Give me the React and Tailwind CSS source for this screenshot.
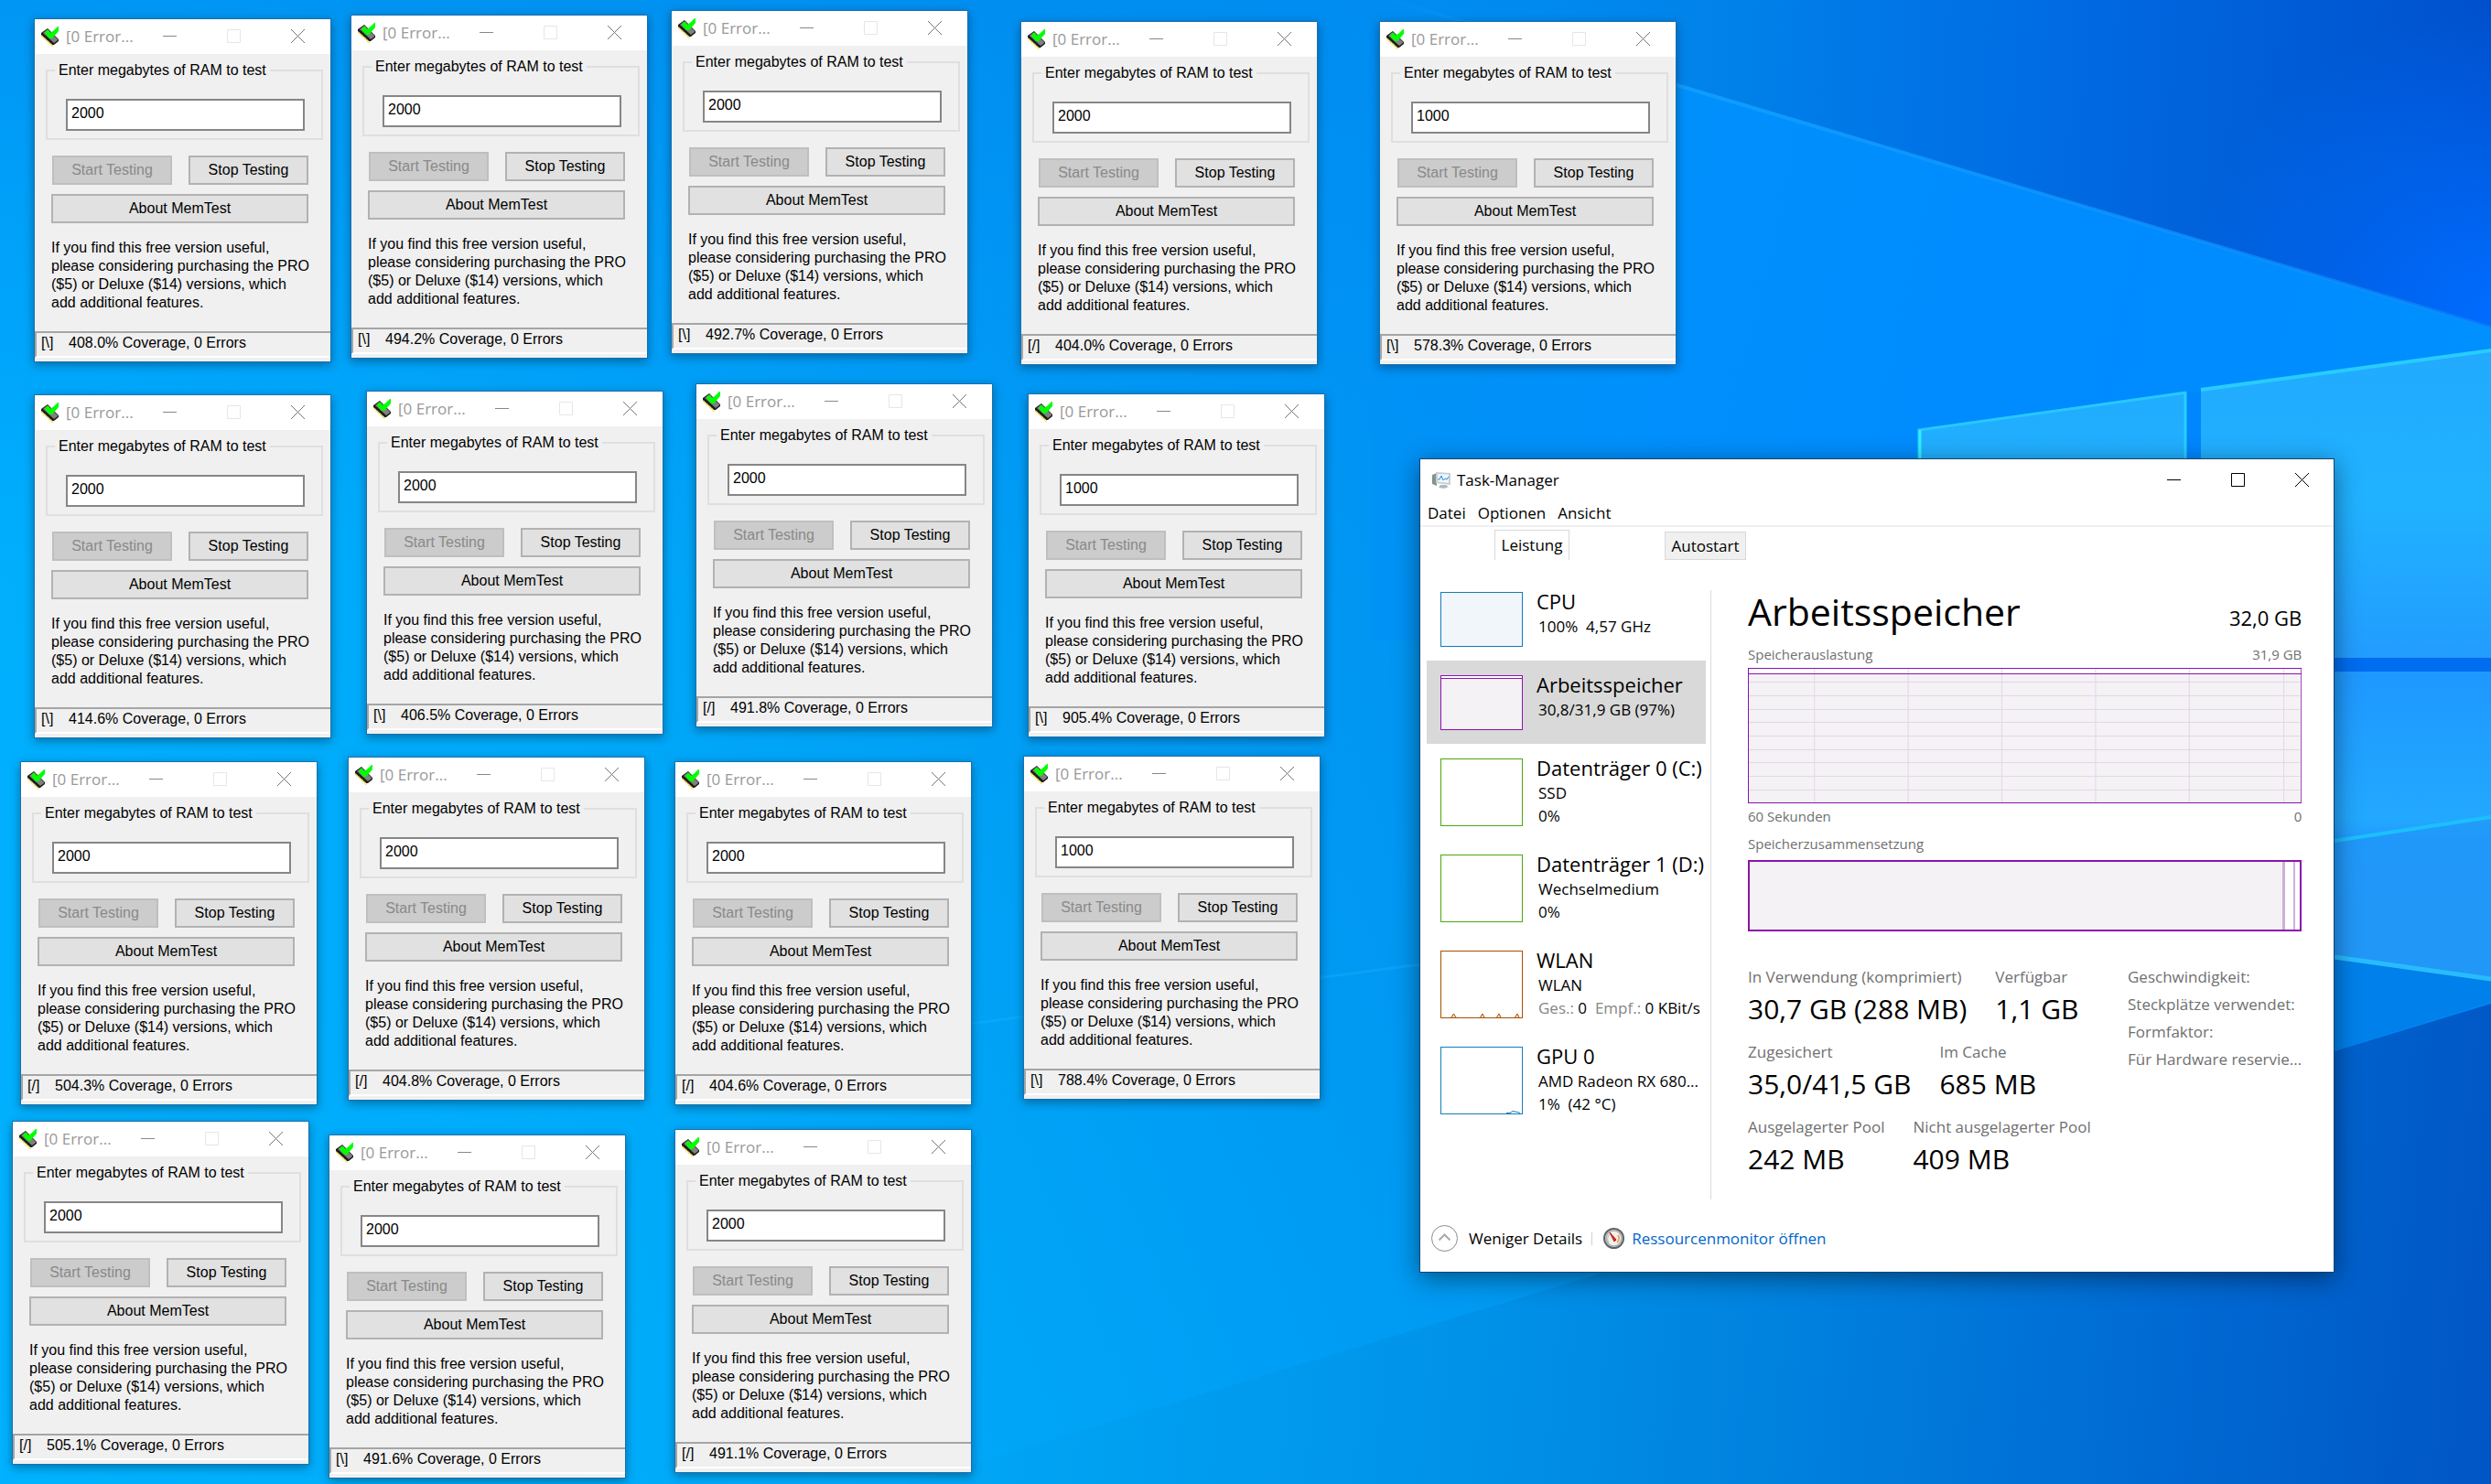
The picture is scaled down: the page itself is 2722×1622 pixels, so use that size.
import React from "react";
import clsx from "clsx";

const memTests = [
  { x: 37, y: 20, mb: "2000", spin: "[\\]", coverage: "408.0%" },
  { x: 383, y: 16, mb: "2000", spin: "[\\]", coverage: "494.2%" },
  { x: 733, y: 11, mb: "2000", spin: "[\\]", coverage: "492.7%" },
  { x: 1115, y: 23, mb: "2000", spin: "[/]", coverage: "404.0%" },
  { x: 1507, y: 23, mb: "1000", spin: "[\\]", coverage: "578.3%" },
  { x: 37, y: 431, mb: "2000", spin: "[\\]", coverage: "414.6%" },
  { x: 400, y: 427, mb: "2000", spin: "[\\]", coverage: "406.5%" },
  { x: 760, y: 419, mb: "2000", spin: "[/]", coverage: "491.8%" },
  { x: 1123, y: 430, mb: "1000", spin: "[\\]", coverage: "905.4%" },
  { x: 22, y: 832, mb: "2000", spin: "[/]", coverage: "504.3%" },
  { x: 380, y: 827, mb: "2000", spin: "[/]", coverage: "404.8%" },
  { x: 737, y: 832, mb: "2000", spin: "[/]", coverage: "404.6%" },
  { x: 1118, y: 826, mb: "1000", spin: "[\\]", coverage: "788.4%" },
  { x: 13, y: 1225, mb: "2000", spin: "[/]", coverage: "505.1%" },
  { x: 359, y: 1240, mb: "2000", spin: "[\\]", coverage: "491.6%" },
  { x: 737, y: 1234, mb: "2000", spin: "[/]", coverage: "491.1%" },
];

const Wallpaper = () => (
  <svg
    className="absolute inset-0 h-full w-full"
    viewBox="0 0 2722 1622"
    preserveAspectRatio="none"
    aria-hidden="true"
  >
    <defs>
      <linearGradient id="base" x1="0" y1="1622" x2="2722" y2="500" gradientUnits="userSpaceOnUse">
        <stop offset="0" stopColor="#00b2ff" />
        <stop offset="0.3" stopColor="#00a9f9" />
        <stop offset="0.55" stopColor="#0098f2" />
        <stop offset="0.8" stopColor="#008cf4" />
        <stop offset="1" stopColor="#0082f8" />
      </linearGradient>
      <linearGradient id="top" x1="0" y1="0" x2="0" y2="620" gradientUnits="userSpaceOnUse">
        <stop offset="0" stopColor="#0088ee" stopOpacity="0.6" />
        <stop offset="1" stopColor="#0090ff" stopOpacity="0" />
      </linearGradient>
      <linearGradient id="sky" x1="1500" y1="0" x2="2722" y2="60" gradientUnits="userSpaceOnUse">
        <stop offset="0" stopColor="#008cf0" stopOpacity="0" />
        <stop offset="0.28" stopColor="#0084ea" />
        <stop offset="0.6" stopColor="#006ce4" />
        <stop offset="1" stopColor="#0050cc" />
      </linearGradient>
      <radialGradient id="skyGlow" cx="2722" cy="340" r="330" gradientUnits="userSpaceOnUse">
        <stop offset="0" stopColor="#006cff" />
        <stop offset="1" stopColor="#006cff" stopOpacity="0" />
      </radialGradient>
      <linearGradient id="beam" x1="1500" y1="0" x2="2722" y2="300" gradientUnits="userSpaceOnUse">
        <stop offset="0" stopColor="#0090f8" stopOpacity="0" />
        <stop offset="0.3" stopColor="#0090fc" />
        <stop offset="0.7" stopColor="#008aff" />
        <stop offset="1" stopColor="#0090ff" />
      </linearGradient>
      <linearGradient id="ray" x1="1500" y1="0" x2="2722" y2="0" gradientUnits="userSpaceOnUse">
        <stop offset="0" stopColor="#18a0ff" stopOpacity="0" />
        <stop offset="0.3" stopColor="#109cff" />
        <stop offset="1" stopColor="#1090ff" stopOpacity="0.5" />
      </linearGradient>
      <linearGradient id="pane" x1="0" y1="380" x2="0" y2="719" gradientUnits="userSpaceOnUse">
        <stop offset="0" stopColor="#22aaff" />
        <stop offset="0.5" stopColor="#20b2ff" />
        <stop offset="1" stopColor="#229cff" />
      </linearGradient>
      <linearGradient id="paneLow" x1="0" y1="734" x2="0" y2="1070" gradientUnits="userSpaceOnUse">
        <stop offset="0" stopColor="#1e98ff" />
        <stop offset="0.48" stopColor="#22a8ff" />
        <stop offset="0.54" stopColor="#209cff" />
        <stop offset="1" stopColor="#2298f6" />
      </linearGradient>
      <linearGradient id="floor" x1="1060" y1="1400" x2="2722" y2="1560" gradientUnits="userSpaceOnUse">
        <stop offset="0" stopColor="#00a6f5" />
        <stop offset="0.3" stopColor="#0094ea" />
        <stop offset="0.55" stopColor="#0080de" />
        <stop offset="0.8" stopColor="#0068d2" />
        <stop offset="1" stopColor="#0056c4" />
      </linearGradient>
    </defs>
    <rect width="2722" height="1622" fill="url(#base)" />
    <rect width="2722" height="620" fill="url(#top)" />
    <path d="M1500 -6L2722 358V700H1500Z" fill="url(#beam)" />
    <path d="M1500 0H2722V358L1840 95L1500 -6Z" fill="url(#sky)" />
    <path d="M1840 95L2722 358V0H1840Z" fill="url(#skyGlow)" />
    <path d="M1500 -6L2722 358" stroke="url(#ray)" strokeWidth="4" />
    <path d="M990 1622L2722 1097V1622Z" fill="url(#floor)" />
    <path d="M1060 1119L1560 1053" stroke="#18b4ff" strokeWidth="3" opacity="0.35" />
    {/* window panes of the logo */}
    <path d="M2389 428H2722V1045H2389Z" fill="#006cf0" />
    <path d="M2389 425L2722 380V428H2389Z" fill="#008eff" />
    <path d="M2389 428H2405V520H2389Z" fill="#0086ff" />
    <path d="M2096 469L2389 428V719H2096Z" fill="url(#pane)" />
    <path d="M2405 425L2722 382V719H2405Z" fill="url(#pane)" />
    <path d="M2405 734H2722V1070L2405 1026Z" fill="url(#paneLow)" />
    <path d="M2551 919L2722 893V1070L2551 1045Z" fill="#2296f6" opacity="0.6" />
    <path d="M2540 1043L2722 1070V1095L2540 1152Z" fill="#0080ea" />
    <path d="M2097 520V470L2389 429" fill="none" stroke="#28c8ff" strokeWidth="3" />
    <path d="M2098 470V520" stroke="#30f0ff" strokeWidth="3" />
    <path d="M2388 429V520" stroke="#28d0ff" strokeWidth="3" />
    <path d="M2405 426L2722 383" stroke="#28ccff" strokeWidth="4" />
    <path d="M2551 919L2722 893" stroke="#1cc0ff" strokeWidth="4" />
    <path d="M2551 1046L2722 1070" stroke="#28bcff" strokeWidth="5" />
  </svg>
);

const ChipIcon = () => (
  <svg className="h-[22px] w-5" viewBox="0 0 20 22" aria-hidden="true">
    <path d="M0 10L13 22" stroke="#e8d840" strokeWidth="2" strokeDasharray="1 1" />
    <path d="M0 7L7 2L19 14V16L14 20H12L0 9Z" fill="#1c1c1c" />
    <path d="M2 7L7 3L18 14V15L14 18Z" fill="#808080" />
    <path d="M1 10L12 20" stroke="#e8d840" strokeWidth="1" strokeDasharray="1 1" />
    <path d="M4 7L6 4L8 4L10 7L14 4L18 0H19V5L12 13H9Z" fill="#0f0" />
  </svg>
);

const CaptionButtons = ({ dim, className }) => (
  <div className={clsx("flex", className)}>
    <button aria-label="Minimize" className="h-4 w-4">
      <svg viewBox="0 0 16 16" stroke={dim ? "#888" : "#000"}>
        <path d="M0 7.5H15" />
      </svg>
    </button>
    <button aria-label="Maximize" disabled={dim} className="h-4 w-4">
      <svg viewBox="0 0 16 16" fill="none" stroke={dim ? "#e6e6e6" : "#000"}>
        <path d="M.5 .5H14.5V14.5H.5Z" />
      </svg>
    </button>
    <button aria-label="Close" className="h-4 w-4">
      <svg viewBox="0 0 16 16" stroke={dim ? "#777" : "#000"}>
        <path d="M0 0L15 15M15 0L0 15" />
      </svg>
    </button>
  </div>
);

const MemTestWindow = ({ id, x, y, mb, spin, coverage }) => (
  <section
    className="absolute flex w-[325px] flex-col border border-[#1a6fae] bg-[#f0f0f0] font-['Liberation_Sans',sans-serif] text-[16px] leading-5 text-black shadow-[0_3px_10px_rgba(0,0,0,0.35)]"
    style={{ left: x, top: y }}
  >
    <header className="flex h-[38px] items-center bg-white pl-[7px]">
      <ChipIcon />
      <h2 className="ml-[7px] font-['Open_Sans',sans-serif] text-[17px] text-[#999]">[0 Error...</h2>
      <CaptionButtons dim className="mr-[27px] ml-auto gap-[54px]" />
    </header>
    <fieldset className="mt-2 mr-2 ml-3 h-[86px] border-2 border-[#dfdfdf] pr-[18px] pl-5">
      <legend className="-ml-3 px-1">
        <label htmlFor={id}>Enter megabytes of RAM to test</label>
      </legend>
      <input
        id={id}
        defaultValue={mb}
        className="mt-[21px] block h-[35px] w-full border-2 border-[#868686] bg-white px-1 pb-1"
      />
    </fieldset>
    <div className="mt-[17px] mr-6 ml-[19px] flex justify-between">
      <button disabled className="h-8 w-[131px] border-2 border-[#bfbfbf] bg-[#ccc] text-[#898989]">
        Start Testing
      </button>
      <button className="h-8 w-[131px] border-2 border-[#b2b2b2] bg-[#e1e1e1]">Stop Testing</button>
    </div>
    <button className="mt-2.5 mr-6 ml-[18px] h-8 border-2 border-[#b2b2b2] bg-[#e1e1e1]">
      About MemTest
    </button>
    <p className="mt-[17px] ml-[18px] whitespace-nowrap">
      If you find this free version useful,
      <br />
      please considering purchasing the PRO
      <br />
      ($5) or Deluxe ($14) versions, which
      <br />
      add additional features.
    </p>
    <footer className="mt-[21px] mb-1 flex h-[29px] border-t-2 border-b-2 border-l-2 border-t-[#a5a5a5] border-b-white border-l-[#a5a5a5] pt-px pl-[5px]">
      <span className="w-[30px]">{spin}</span>
      <span>{coverage} Coverage, 0 Errors</span>
    </footer>
  </section>
);

const devices = [
  { name: "CPU", lines: ["100%  4,57 GHz"], graph: "h-[60px] border-[#117dbb] bg-[#f1f6fa]" },
  {
    name: "Arbeitsspeicher",
    lines: ["30,8/31,9 GB (97%)"],
    graph: "h-[60px] border-[#8b12ae] bg-[#f4f2f4]",
    selected: true,
    chart: (
      <>
        <path d="M0 0H88V2H0Z" fill="#fff" />
        <path d="M0 2.5H88" stroke="#8b12ae" />
      </>
    ),
  },
  { name: "Datenträger 0 (C:)", lines: ["SSD", "0%"], graph: "h-[74px] border-[#4da60c] bg-white" },
  { name: "Datenträger 1 (D:)", lines: ["Wechselmedium", "0%"], graph: "h-[74px] border-[#4da60c] bg-white" },
  {
    name: "WLAN",
    lines: [
      "WLAN",
      <>
        <span className="text-[#868686]">Ges.:</span>
        {" 0  "}
        <span className="text-[#868686]">Empf.:</span>
        {" 0 KBit/s"}
      </>,
    ],
    graph: "h-[74px] border-[#a74f01] bg-white",
    chart: (
      <path
        d="M11 72L13.5 68L16 72M42.5 72L45 68L47 72M60.5 72L63 68L65 72M80.5 72L83 68L85 72"
        fill="#eedfcf"
        stroke="#a74f01"
      />
    ),
  },
  {
    name: "GPU 0",
    lines: ["AMD Radeon RX 680...", "1%  (42 °C)"],
    graph: "h-[74px] border-[#117dbb] bg-white",
    chart: <path d="M71 71.5H75L78 69.5L83 70.5L86 71.5" fill="none" stroke="#117dbb" />,
  },
];

const DeviceItem = ({ device }) => (
  <button
    className={clsx(
      "flex w-[305px] gap-[15px] pt-4 pb-[15px] pl-[15px] text-left whitespace-nowrap",
      device.selected && "bg-[#d9d9d9]"
    )}
  >
    <span className={clsx("w-[90px] shrink-0 border", device.graph)}>
      <svg className="h-full w-full" viewBox={device.graph.startsWith("h-[60px]") ? "0 0 88 58" : "0 0 88 72"}>
        {device.chart}
      </svg>
    </span>
    <span className="-my-1 flex h-0 flex-col">
      <span className="text-[22px] leading-[29px]">{device.name}</span>
      {device.lines.map((line, index) => (
        <span key={index} className="pl-0.5 text-[17px] leading-[25px] whitespace-pre">
          {line}
        </span>
      ))}
    </span>
  </button>
);

const UsageGraph = () => (
  <svg className="block h-[148px] w-full" viewBox="0 0 603 148" preserveAspectRatio="none" aria-hidden="true">
    <path d="M0 0H603V148H0Z" fill="#fff" />
    <path d="M0 6H603V148H0Z" fill="#f4f2f4" />
    <path
      d="M0 15.5H601M0 30.5H601M0 45.5H601M0 59.5H601M0 74.5H601M0 89.5H601M0 103.5H601M0 118.5H601M0 133.5H601M72.5 0V148M174.5 0V148M276.5 0V148M378.5 0V148M480.5 0V148M583.5 0V148"
      stroke="#e4d5e9"
    />
    <path d="M0 6.5H603M.5 .5H602.5V147.5H.5Z" fill="none" stroke="#8b12ae" />
  </svg>
);

const Stat = ({ label, value }) => (
  <div className="h-[82px]">
    <dt className="text-[17px] leading-[30px] text-[#707070]">{label}</dt>
    <dd className="text-[30px] leading-10">{value}</dd>
  </div>
);

const TaskManagerIcon = () => (
  <svg className="h-5 w-5" viewBox="0 0 20 20" aria-hidden="true">
    <path d="M0 4L5 2V16L0 14Z" fill="#8b9298" />
    <path d="M1 6V13" stroke="#5f9a5a" strokeWidth="1" />
    <path d="M4 1L20 2V15L4 13Z" fill="#c9cdd1" />
    <path d="M6 3L18 3.5V13L6 11.5Z" fill="#eef6fc" />
    <path d="M6 9L8 9L10 5L12 10L14 8L16 9L18 6" fill="none" stroke="#2b8fd0" />
    <path d="M9 15H15L18 17L13 19L7 18Z" fill="#b4b8bb" />
  </svg>
);

const GaugeIcon = () => (
  <svg className="h-[23px] w-[23px]" viewBox="0 0 23 23" aria-hidden="true">
    <circle cx="11.5" cy="11.5" r="10.5" fill="#e8e6e2" stroke="#5c6468" strokeWidth="2" />
    <circle cx="11.5" cy="11.5" r="8.5" fill="#f3efea" stroke="#a9adb0" strokeWidth="1.5" />
    <path d="M16 8A6 6 0 0 1 15 16" fill="none" stroke="#e9a65c" strokeWidth="2" />
    <path d="M6 16A6.5 6.5 0 0 1 7 7" fill="none" stroke="#b9b4ac" strokeWidth="1" />
    <path d="M7 5L14 13L12 15Z" fill="#d8291c" stroke="#b02018" />
  </svg>
);

const TaskManager = () => (
  <main className="absolute top-[501px] left-[1551px] w-[1000px] border border-[#12466f] bg-white font-['Open_Sans','Noto_Sans',sans-serif] text-[17px] text-black shadow-[0_6px_26px_rgba(0,0,0,0.45)]">
    <header className="flex h-11 items-center pt-px pl-[13px]">
      <TaskManagerIcon />
      <h1 className="ml-[7px]">Task-Manager</h1>
      <CaptionButtons className="mr-[26px] ml-auto gap-[54px]" />
    </header>
    <nav className="flex h-[30px] gap-[13px] border-b-2 border-[#f0f0f0] pl-2 leading-[30px]">
      <button>Datei</button>
      <button>Optionen</button>
      <button>Ansicht</button>
    </nav>
    <div role="tablist" className="flex h-9 items-end pl-[81px]">
      <button role="tab" aria-selected="true" className="h-[33px] w-[82px] border border-b-0 border-[#d9d9d9]">
        Leistung
      </button>
      <button
        role="tab"
        aria-selected="false"
        className="ml-[104px] h-[31px] w-[89px] border border-[#d9d9d9] bg-[#f0f0f0]"
      >
        Autostart
      </button>
    </div>
    <div className="mt-[19px] flex h-[680px]">
      <aside className="flex w-[311px] shrink-0 flex-col pl-[7px]">
        {devices.map((device) => (
          <DeviceItem key={device.name} device={device} />
        ))}
      </aside>
      <section className="mt-3.5 ml-1.5 flex-1 border-l border-[#d9d9d9] pr-[37px] pl-10">
        <div className="flex items-baseline justify-between">
          <h2 className="text-[41px] leading-[46px]">Arbeitsspeicher</h2>
          <span className="text-[22px]">32,0 GB</span>
        </div>
        <div className="mt-2.5 mb-0.5 flex justify-between text-[15px] leading-[26px] text-[#707070]">
          <span>Speicherauslastung</span>
          <span>31,9 GB</span>
        </div>
        <UsageGraph />
        <div className="mt-px flex justify-between text-[15px] leading-[26px] text-[#707070]">
          <span>60 Sekunden</span>
          <span>0</span>
        </div>
        <div className="mt-1 text-[15px] leading-[26px] text-[#707070]">Speicherzusammensetzung</div>
        <div className="mt-[5px] flex h-[78px] border-2 border-[#8b12ae]">
          <div className="flex-1 border-r-[3px] border-[#cdb0d8] bg-[#f4f2f4]" />
          <div className="w-[11px] border-r-2 border-[#cdb0d8]" />
          <div className="w-[5px]" />
        </div>
        <div className="mt-[35px] flex whitespace-nowrap">
          <dl className="w-[415px]">
            <div className="flex gap-[31px]">
              <Stat label="In Verwendung (komprimiert)" value="30,7 GB (288 MB)" />
              <Stat label="Verfügbar" value="1,1 GB" />
            </div>
            <div className="flex gap-[31px]">
              <Stat label="Zugesichert" value="35,0/41,5 GB" />
              <Stat label="Im Cache" value="685 MB" />
            </div>
            <div className="flex gap-[31px]">
              <Stat label="Ausgelagerter Pool" value="242 MB" />
              <Stat label="Nicht ausgelagerter Pool" value="409 MB" />
            </div>
          </dl>
          <ul className="leading-[30px] text-[#707070]">
            <li>Geschwindigkeit:</li>
            <li>Steckplätze verwendet:</li>
            <li>Formfaktor:</li>
            <li>Für Hardware reservie...</li>
          </ul>
        </div>
      </section>
    </div>
    <footer className="flex h-[79px] items-center pt-1.5 pl-3">
      <button className="flex items-center gap-3">
        <svg className="h-[29px] w-[29px]" viewBox="0 0 29 29" fill="none" stroke="#8a8a8a" aria-hidden="true">
          <circle cx="14.5" cy="14.5" r="14" />
          <path d="M8.5 16.5L14.5 10.5L20.5 16.5" stroke="#aaa" strokeWidth="2" />
        </svg>
        Weniger Details
      </button>
      <span className="mr-3 ml-2.5 h-3.5 border-l border-[#d0d0d0]" />
      <GaugeIcon />
      <a href="#resmon" className="ml-2 text-[#0066cc]">
        Ressourcenmonitor öffnen
      </a>
    </footer>
  </main>
);

const App = () => {
  return (
    <div className="relative min-h-screen w-full overflow-hidden bg-[#00a2f8]">
      <Wallpaper />
      {memTests.map((test, index) => (
        <MemTestWindow key={index} id={`ram-${index}`} {...test} />
      ))}
      <TaskManager />
    </div>
  );
};

export default App;
